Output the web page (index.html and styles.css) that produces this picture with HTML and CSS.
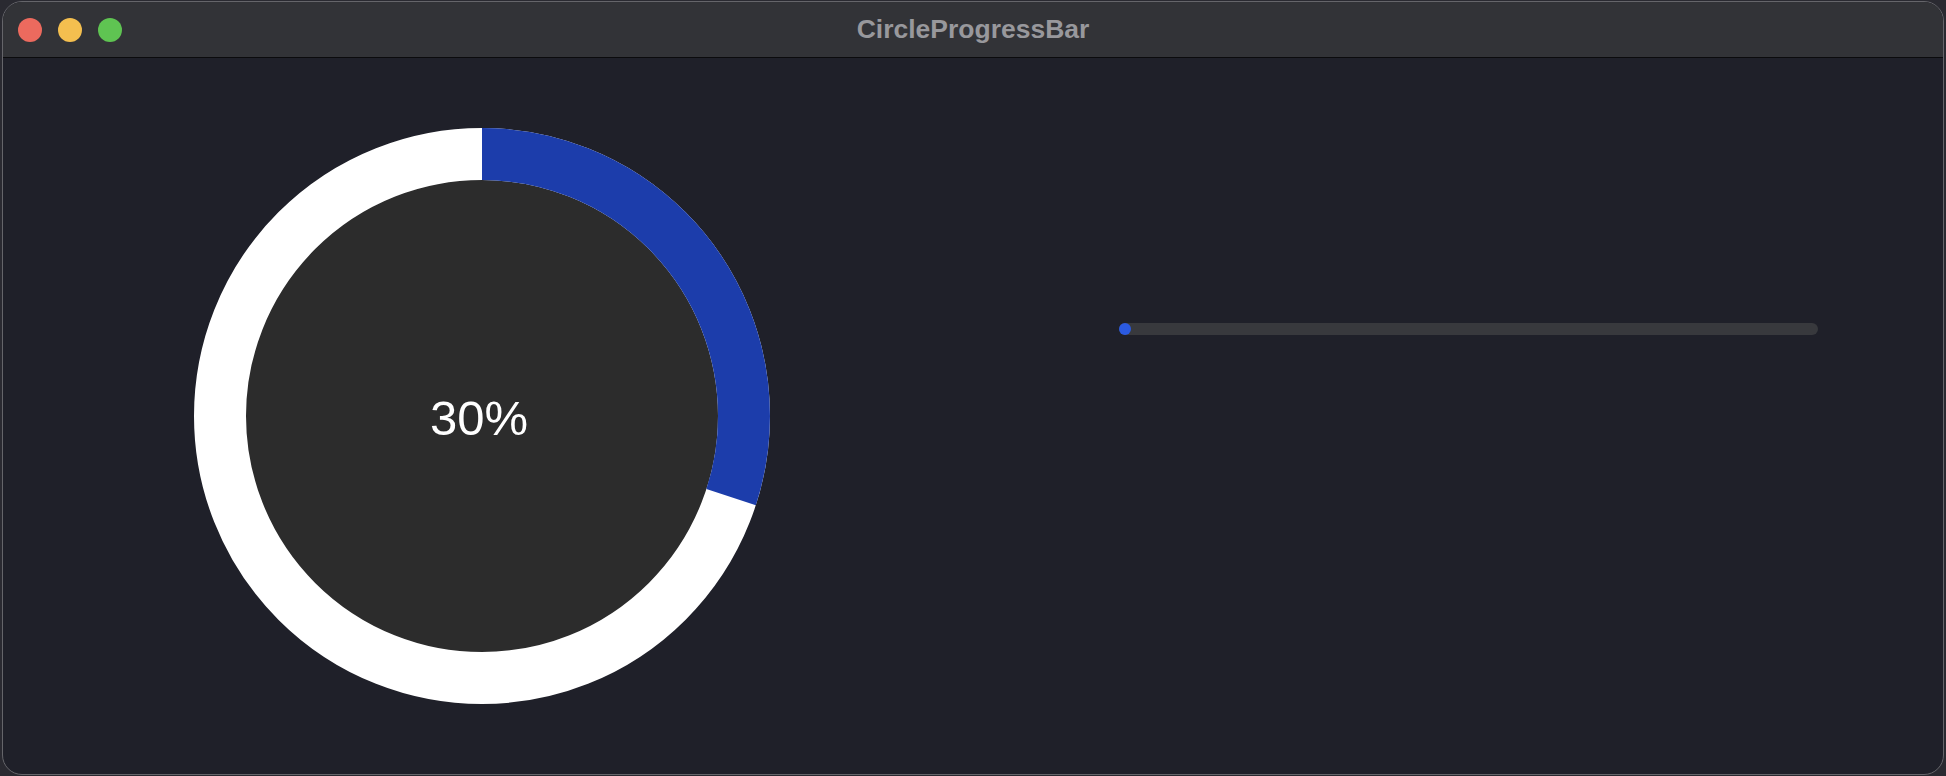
FILE: index.html
```html
<!DOCTYPE html>
<html lang="en">
<head>
<meta charset="utf-8">
<title>CircleProgressBar</title>
<link rel="stylesheet" href="styles.css">
</head>
<body>
<div class="window">
  <div class="titlebar">
    <div class="lights">
      <span class="light red"></span>
      <span class="light yellow"></span>
      <span class="light green"></span>
    </div>
    <div class="title">CircleProgressBar</div>
    <div class="spacer"></div>
  </div>
  <div class="content">
    <div class="ring">
      <svg class="ring-svg" width="576" height="576" viewBox="0 0 576 576">
        <circle cx="288" cy="288" r="262" fill="#2c2c2c" stroke="#ffffff" stroke-width="52"/>
        <circle cx="288" cy="288" r="262" fill="none" stroke="#1c3dab" stroke-width="52"
          stroke-dasharray="493.9 2000" transform="rotate(-90 288 288)"/>
      </svg>
      <div class="ring-label">30%</div>
    </div>
    <div class="bar">
      <div class="bar-fill"></div>
    </div>
  </div>
</div>
</body>
</html>
```

FILE: styles.css
```css
* { box-sizing: border-box; }
html, body { margin: 0; padding: 0; }
body {
  width: 1946px;
  height: 776px;
  background: #2a2a31;
  padding: 1px 2px 1px 2px;
  overflow: hidden;
  font-family: "Liberation Sans", Arial, sans-serif;
}
.window {
  width: 1942px;
  height: 774px;
  border: 1px solid #65656a;
  border-radius: 20px;
  overflow: hidden;
  background: #1f2029;
  display: flex;
  flex-direction: column;
}
.titlebar {
  height: 56px;
  flex: none;
  background: #323337;
  border-bottom: 1px solid #0b0b0d;
  display: grid;
  grid-template-columns: 1fr auto 1fr;
  align-items: center;
}
.lights {
  display: flex;
  gap: 16px;
  padding-left: 15px;
  padding-top: 1px;
}
.light {
  width: 24px;
  height: 24px;
  border-radius: 50%;
  display: block;
}
.red { background: #ec6a5e; }
.yellow { background: #f4bf4f; }
.green { background: #5fc452; }
.title {
  color: #98989c;
  font-weight: bold;
  font-size: 26.5px;
  line-height: 30px;
  margin-top: -2px;
}
.content {
  flex: 1;
  display: flex;
  align-items: flex-start;
  padding-left: 191px;
}
.ring {
  margin-top: 70px;
  display: grid;
  place-items: center;
  width: 576px;
  height: 576px;
}
.ring-svg, .ring-label { grid-area: 1 / 1; }
.ring-svg { display: block; }
.ring-label {
  color: #ffffff;
  font-size: 49px;
  line-height: 1;
  margin-left: -6px;
  margin-top: 4px;
}
.bar {
  margin-left: 349px;
  margin-top: 265px;
  width: 699px;
  height: 12px;
  border-radius: 6px;
  background: #38393d;
}
.bar-fill {
  width: 12px;
  height: 12px;
  border-radius: 50%;
  background: #2b5ae0;
}
```
